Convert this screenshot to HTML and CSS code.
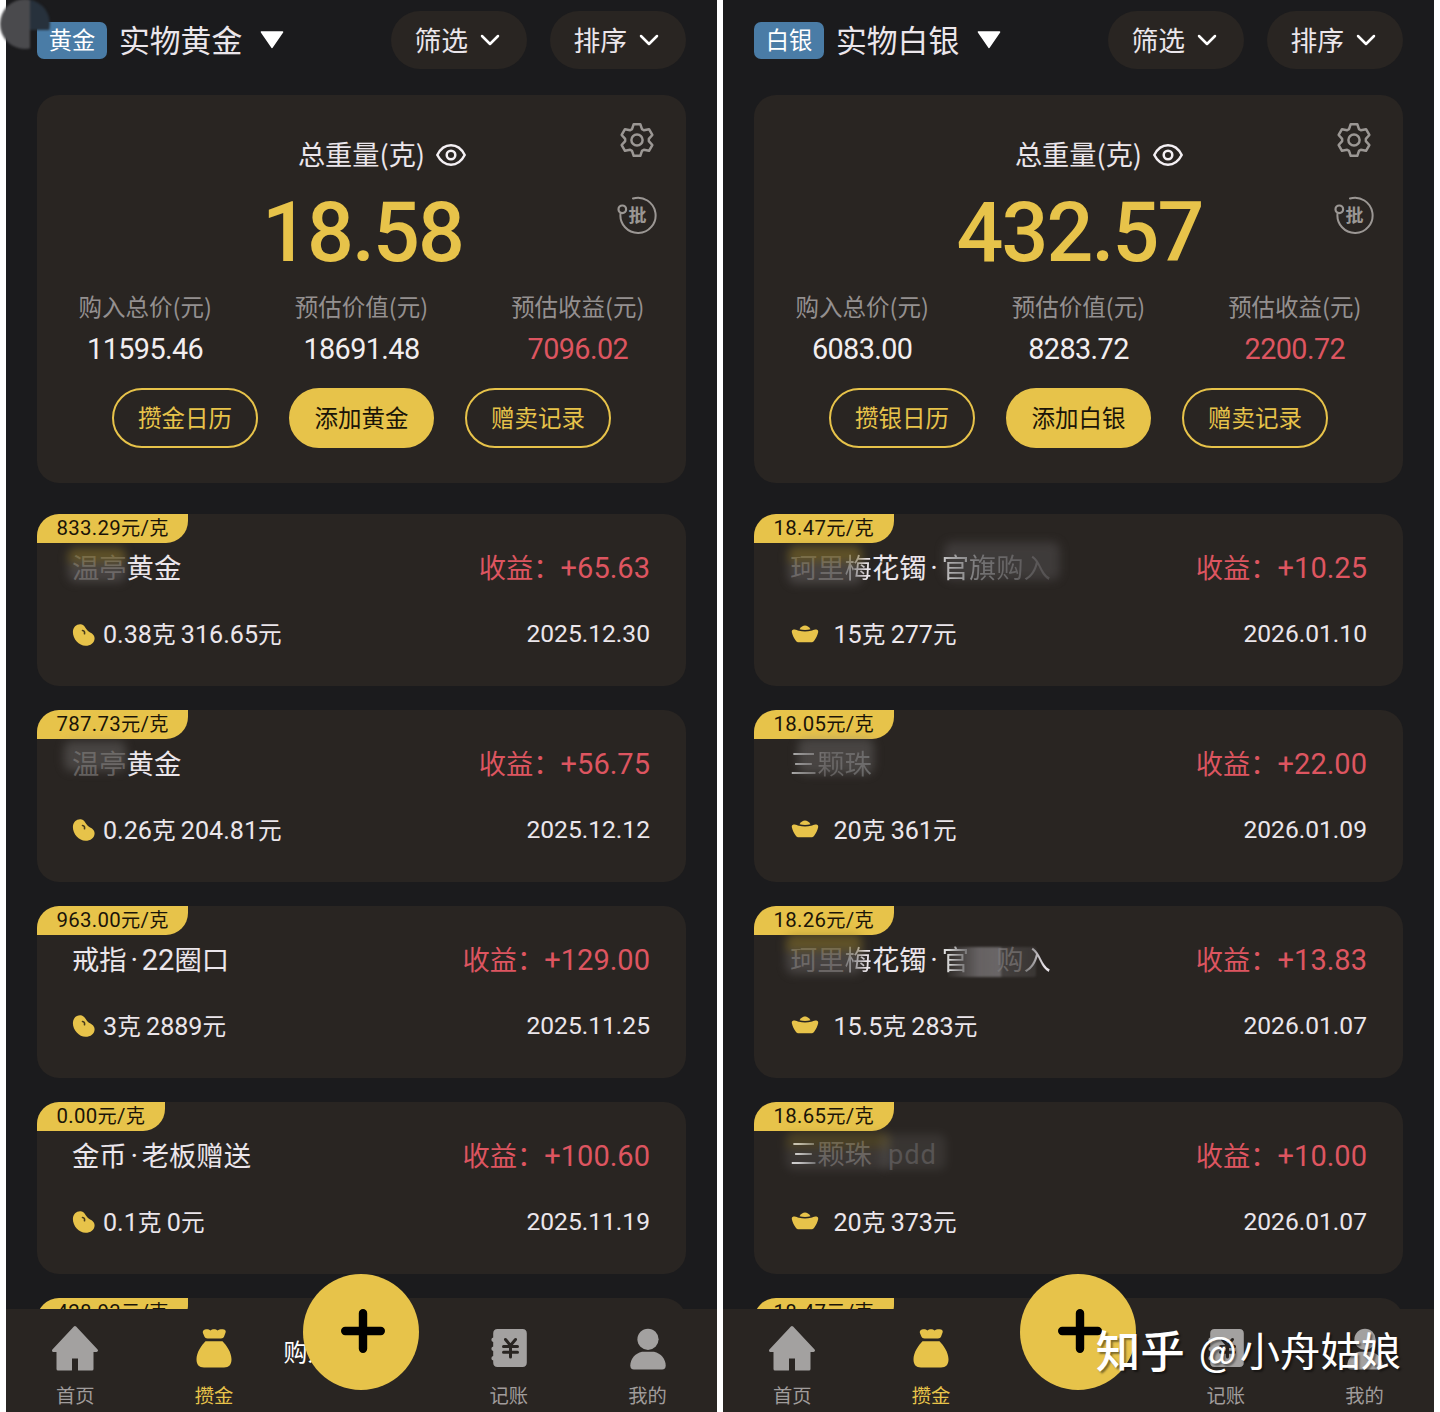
FILE: index.html
```html
<!DOCTYPE html>
<html lang="zh-CN">
<head>
<meta charset="utf-8">
<title>攒金</title>
<link rel="stylesheet" href="styles.css">
</head>
<body>
<svg class="sprite" aria-hidden="true">
  <symbol id="chevron" viewBox="0 0 20 12"><path d="M2 2l8 8 8-8" fill="none" stroke="#fff" stroke-width="2.500" stroke-linecap="round" stroke-linejoin="round"/></symbol>
  <symbol id="triangle" viewBox="0 0 24 18"><path d="M1.5 1h21L12 16.300z" fill="#fff" stroke="#fff" stroke-width="1.600" stroke-linejoin="round"/></symbol>
  <symbol id="eye" viewBox="0 0 30 22"><path d="M1.300 11C4.500 4.700 9.500 1.300 15 1.300S25.500 4.700 28.700 11C25.500 17.300 20.500 20.700 15 20.700S4.500 17.300 1.300 11z" fill="none" stroke="#f4f0f4" stroke-width="2.500" stroke-linejoin="round"/><circle cx="15" cy="11" r="4.300" fill="none" stroke="#f4f0f4" stroke-width="2.500"/></symbol>
  <symbol id="gear" viewBox="-20 -20 40 40"><path d="M-5-10.800L-3.300-15.800H3.300L5-10.800 6.850-9.730 12.030-10.760 15.330-5.040 11.850-1.070V1.070L15.330 5.040 12.030 10.760 6.850 9.730 5 10.800 3.300 15.800H-3.300L-5 10.800-6.850 9.730-12.030 10.760-15.330 5.040-11.850 1.070V-1.070L-15.330-5.040-12.030-10.760-6.850-9.730z" fill="none" stroke="#9b9794" stroke-width="2.500" stroke-linejoin="round"/><circle r="5.600" fill="none" stroke="#9b9794" stroke-width="2.500"/></symbol>
  <symbol id="batch" viewBox="0 0 40 40"><path d="M16 2.500A17.600 17.600 0 1 1 3.500 17.500" fill="none" stroke="#9b9794" stroke-width="2" stroke-linecap="round"/><circle cx="5.300" cy="13.300" r="3.800" fill="none" stroke="#9b9794" stroke-width="2.200"/></symbol>
  <symbol id="bean" viewBox="0 0 24 24"><path d="M8.500 1.200C12.500 1.500 13.500 5.500 16 8c2.500 2 6.700 3 6.600 7.500C22.500 20 18.500 22.800 13.500 22.800 7 22.600.8 16 .9 9 1 4 4.500 1 8.500 1.200z" fill="#e7c34a"/><path d="M10.500 7.500c2 .3 2.300 1.500 2 3.300" fill="none" stroke="#4a3d1c" stroke-width="1.600" stroke-linecap="round"/></symbol>
  <symbol id="ingot" viewBox="0 0 28 18"><path d="M2.500 4.500C5 4 6 5.200 8 5.800c3.500 1 8.500 1 12 0 2-.6 3-1.800 5.500-1.300 1.500.3 2 1.500 1.600 3-.8 3-2 5.500-3.600 7.800-.9 1.400-1.700 2-3.500 2H8c-1.800 0-2.600-.6-3.500-2C2.900 13 1.700 10.500.9 7.500.5 6 1 4.800 2.500 4.500z" fill="#e7c34a"/><path d="M8.500 4.300C10 1.500 12 .4 14 .4s4 1.100 5.500 3.900c-3.300.9-7.700.9-11 0z" fill="#e7c34a"/></symbol>
  <symbol id="home" viewBox="0 0 48 46"><path d="M24 2.500L45.500 25.500H41V44H27.500V33.500h-7V44H7V25.500H2.500z" fill="#a3a1a0" stroke="#a3a1a0" stroke-width="3" stroke-linejoin="round"/><path d="M21 46V33.500h6V46z" fill="#292522"/></symbol>
  <symbol id="bag" viewBox="0 0 36 40"><path d="M9 1.500c2.500-.6 4 0 5.500 1C16 .8 20 .8 21.500 2.500c1.500-1 4-1.600 6.500-1 1.800.5 2.200 2 1.300 3.800l-1.300 3.500c-.7 1.300-1.300 1.700-3 1.700H11.500c-1.700 0-2.300-.4-3-1.700L7 5.300C6.300 3.500 7.200 2 9 1.500z" fill="#e7c34a"/><path d="M9.500 13.300h17c4 4 9 11.200 9 18 0 5.500-2.500 8.200-7.500 8.200H8C3 39.500.5 36.800.5 31.300c0-6.800 5-14 9-18z" fill="#e7c34a"/></symbol>
  <symbol id="ledger" viewBox="0 0 36 40"><path d="M6.500 1h25a4.500 4.500 0 0 1 4.300 4.500v29a4.500 4.500 0 0 1-4.300 4.500h-25A4.500 4.500 0 0 1 2.200 34.500V32.500a2.300 2.300 0 0 1 0-4.500V23a2.300 2.300 0 0 1 0-4.500V14a2.300 2.300 0 0 1 0-4.500v-4A4.500 4.500 0 0 1 6.500 1z" fill="#a3a1a0"/><path d="M14.500 11.500l5 6 5-6M19.500 18v11M12.500 18.500h14M12.500 24.300h14" fill="none" stroke="#292522" stroke-width="3" stroke-linecap="round"/></symbol>
  <symbol id="user" viewBox="0 0 36 42"><circle cx="18" cy="11.300" r="10.600" fill="#a3a1a0"/><path d="M12 23.800h12c7 1.500 11.700 7.500 11.700 13.700 0 2.500-1.200 4-3.700 4H4c-2.500 0-3.700-1.500-3.700-4C.3 31.300 5 25.300 12 23.800z" fill="#a3a1a0"/></symbol>
  <symbol id="plus" viewBox="0 0 44 44"><path d="M22 4.200v35.600M4.200 22h35.600" stroke="#000" stroke-width="8.400" stroke-linecap="round"/></symbol>
</svg>

<main class="screens">
  <section class="phone">
    <header class="top">
      <span class="tag">黄金</span>
      <h1 class="asset">实物黄金</h1>
      <svg class="tri"><use href="#triangle"/></svg>
      <button class="pill">筛选<svg><use href="#chevron"/></svg></button>
      <button class="pill">排序<svg><use href="#chevron"/></svg></button>
    </header>
    <div class="summary">
      <div class="figures">
        <div class="caption">总重量(克)<svg><use href="#eye"/></svg></div>
        <div class="total">18.58</div>
        <dl class="stats">
          <div><dt>购入总价(元)</dt><dd>11595.46</dd></div>
          <div><dt>预估价值(元)</dt><dd>18691.48</dd></div>
          <div><dt>预估收益(元)</dt><dd class="red">7096.02</dd></div>
        </dl>
        <div class="actions"><button class="btn">攒金日历</button><button class="btn solid">添加黄金</button><button class="btn">赠卖记录</button></div>
      </div>
      <div class="tools"><svg><use href="#gear"/></svg><div class="batch"><svg><use href="#batch"/></svg><span>批</span></div></div>
    </div>
    <div class="list">
      <article class="item">
        <div class="price"><span class="n">833.29</span>元<span class="n">/</span>克</div>
        <div class="row head"><h2><span class="dim">温亭</span>黄金<i class="smear gold s1"></i></h2><p class="red">收益：<span class="n">+65.63</span></p></div>
        <div class="row"><p class="info"><svg class="bean"><use href="#bean"/></svg><span><span class="n">0.38</span>克 <span class="n">316.65</span>元</span></p><time>2025.12.30</time></div>
      </article>
      <article class="item">
        <div class="price"><span class="n">787.73</span>元<span class="n">/</span>克</div>
        <div class="row head"><h2><span class="dim">温亭</span>黄金<i class="smear s2"></i></h2><p class="red">收益：<span class="n">+56.75</span></p></div>
        <div class="row"><p class="info"><svg class="bean"><use href="#bean"/></svg><span><span class="n">0.26</span>克 <span class="n">204.81</span>元</span></p><time>2025.12.12</time></div>
      </article>
      <article class="item">
        <div class="price"><span class="n">963.00</span>元<span class="n">/</span>克</div>
        <div class="row head"><h2>戒指<span class="n dot">·</span><span class="n">22</span>圈口</h2><p class="red">收益：<span class="n">+129.00</span></p></div>
        <div class="row"><p class="info"><svg class="bean"><use href="#bean"/></svg><span><span class="n">3</span>克 <span class="n">2889</span>元</span></p><time>2025.11.25</time></div>
      </article>
      <article class="item">
        <div class="price"><span class="n">0.00</span>元<span class="n">/</span>克</div>
        <div class="row head"><h2>金币<span class="n dot">·</span>老板赠送</h2><p class="red">收益：<span class="n">+100.60</span></p></div>
        <div class="row"><p class="info"><svg class="bean"><use href="#bean"/></svg><span><span class="n">0.1</span>克 <span class="n">0</span>元</span></p><time>2025.11.19</time></div>
      </article>
      <article class="item">
        <div class="price"><span class="n">428.93</span>元<span class="n">/</span>克</div>
      </article>
    </div>
    <nav class="nav">
      <a><svg class="i-home"><use href="#home"/></svg>首页</a>
      <a class="on"><svg class="i-bag"><use href="#bag"/></svg>攒金</a>
      <div class="mid"><span class="under">购入</span><button class="fab"><svg><use href="#plus"/></svg></button></div>
      <a><svg class="i-ledger"><use href="#ledger"/></svg>记账</a>
      <a><svg class="i-user"><use href="#user"/></svg>我的</a>
    </nav>
    <i class="blot"></i>
  </section>

  <section class="phone silver">
    <header class="top">
      <span class="tag">白银</span>
      <h1 class="asset">实物白银</h1>
      <svg class="tri"><use href="#triangle"/></svg>
      <button class="pill">筛选<svg><use href="#chevron"/></svg></button>
      <button class="pill">排序<svg><use href="#chevron"/></svg></button>
    </header>
    <div class="summary">
      <div class="figures">
        <div class="caption">总重量(克)<svg><use href="#eye"/></svg></div>
        <div class="total">432.57</div>
        <dl class="stats">
          <div><dt>购入总价(元)</dt><dd>6083.00</dd></div>
          <div><dt>预估价值(元)</dt><dd>8283.72</dd></div>
          <div><dt>预估收益(元)</dt><dd class="red">2200.72</dd></div>
        </dl>
        <div class="actions"><button class="btn">攒银日历</button><button class="btn solid">添加白银</button><button class="btn">赠卖记录</button></div>
      </div>
      <div class="tools"><svg><use href="#gear"/></svg><div class="batch"><svg><use href="#batch"/></svg><span>批</span></div></div>
    </div>
    <div class="list">
      <article class="item">
        <div class="price"><span class="n">18.47</span>元<span class="n">/</span>克</div>
        <div class="row head"><h2><span class="dim">珂里</span><span class="fade">梅</span>花镯<span class="n dot">·</span><span class="fade out">官旗购入</span><i class="smear gold s3"></i><i class="smear s4"></i></h2><p class="red">收益：<span class="n">+10.25</span></p></div>
        <div class="row"><p class="info"><svg class="ingot"><use href="#ingot"/></svg><span><span class="n">15</span>克 <span class="n">277</span>元</span></p><time>2026.01.10</time></div>
      </article>
      <article class="item">
        <div class="price"><span class="n">18.05</span>元<span class="n">/</span>克</div>
        <div class="row head"><h2><span class="fade down">三颗珠</span><i class="smear s5"></i></h2><p class="red">收益：<span class="n">+22.00</span></p></div>
        <div class="row"><p class="info"><svg class="ingot"><use href="#ingot"/></svg><span><span class="n">20</span>克 <span class="n">361</span>元</span></p><time>2026.01.09</time></div>
      </article>
      <article class="item">
        <div class="price"><span class="n">18.26</span>元<span class="n">/</span>克</div>
        <div class="row head"><h2><span class="dim">珂里</span><span class="fade">梅</span>花镯<span class="n dot">·</span><span class="fade out1">官</span><span class="gone">旗</span><span class="dim">购</span><span class="fade">入</span><i class="smear gold s6"></i><i class="smear s7"></i></h2><p class="red">收益：<span class="n">+13.83</span></p></div>
        <div class="row"><p class="info"><svg class="ingot"><use href="#ingot"/></svg><span><span class="n">15.5</span>克 <span class="n">283</span>元</span></p><time>2026.01.07</time></div>
      </article>
      <article class="item">
        <div class="price"><span class="n">18.65</span>元<span class="n">/</span>克</div>
        <div class="row head"><h2><span class="fade out1">三</span><span class="dim">颗珠</span><span class="dim pdd">pdd</span><i class="smear gold s8"></i><i class="smear s9"></i></h2><p class="red">收益：<span class="n">+10.00</span></p></div>
        <div class="row"><p class="info"><svg class="ingot"><use href="#ingot"/></svg><span><span class="n">20</span>克 <span class="n">373</span>元</span></p><time>2026.01.07</time></div>
      </article>
      <article class="item">
        <div class="price"><span class="n">18.47</span>元<span class="n">/</span>克</div>
      </article>
    </div>
    <nav class="nav">
      <a><svg class="i-home"><use href="#home"/></svg>首页</a>
      <a class="on"><svg class="i-bag"><use href="#bag"/></svg>攒金</a>
      <div class="mid"><button class="fab"><svg><use href="#plus"/></svg></button></div>
      <a><svg class="i-ledger"><use href="#ledger"/></svg>记账</a>
      <a><svg class="i-user"><use href="#user"/></svg>我的</a>
    </nav>
    <div class="watermark"><b>知乎</b><span class="at">@</span><span>小舟姑娘</span></div>
  </section>
</main>
</body>
</html>
```
FILE: styles.css
```css
* { box-sizing: border-box; margin: 0; padding: 0; }
body {
  width: 1440px; height: 1412px; overflow: hidden; background: #fff;
  color: #ebe6eb; font-family: "Noto Sans CJK SC", sans-serif; font-weight: 400;
}
.sprite { position: absolute; width: 0; height: 0; }
svg { display: block; flex: none; }
button { font: inherit; color: inherit; border: 0; background: none; white-space: nowrap; }
h1, h2 { font-weight: 400; }

.screens { display: flex; gap: 6px; padding: 0 6px; height: 1412px; }
.phone {
  position: relative; width: 711px; height: 1412px; flex: none;
  background: #1b1b1d; padding: 11px 31px 0;
}

/* numerals sit slightly larger than the Chinese text around them */
.n { font-family: Roboto, sans-serif; font-size: 1.064em; line-height: 0; }
.red, .stats .red { color: #dd5560; }

/* header */
.top { display: flex; align-items: center; height: 58px; }
.tag {
  width: 70px; height: 37px; border-radius: 7px; background: #4a7ca6; color: #fff;
  font-size: 23.300px; line-height: 35px; text-align: center;
}
.asset { margin-left: 12px; font-size: 30.800px; line-height: 44px; padding-bottom: 2px; }
.tri { width: 24px; height: 18px; margin: 0 auto 0 18px; }
.pill {
  display: flex; align-items: center; width: 136px; height: 58px; padding-left: 23.500px;
  border-radius: 29px; background: #292522; font-size: 26.800px; line-height: 40px;
}
.pill + .pill { margin-left: 23px; }
.pill svg { width: 20px; height: 12px; margin-left: 12px; }

/* summary card */
.summary { display: grid; height: 388px; margin-top: 26px; border-radius: 22px; background: #292522; }
.figures, .tools { grid-area: 1 / 1; }
.figures { display: flex; flex-direction: column; padding-top: 38px; }
.caption { display: flex; justify-content: center; align-items: center; font-size: 27.200px; line-height: 40px; }
.caption svg { width: 30px; height: 22px; margin: 4px -41px 0 11px; }
.total {
  margin-top: 20px; text-align: center; color: #e7c34a;
  font: 500 82.500px/80px Roboto, sans-serif; letter-spacing: -1.900px; padding-left: 2px;
}
.stats { display: grid; grid-template-columns: repeat(3, 1fr); margin-top: 17px; text-align: center; }
.stats dt { color: #949090; font-size: 23.500px; line-height: 32px; }
.stats dd { margin-top: 9px; color: #f2eef0; font: 400 28.800px/36px Roboto, sans-serif; letter-spacing: -.600px; }
.actions { display: flex; justify-content: center; gap: 31px; margin-top: 21px; }
.btn {
  width: 145.500px; height: 60px; border: 2px solid #e7c34a; border-radius: 30px;
  color: #e7c34a; font-size: 23.500px; line-height: 53px; padding-bottom: 2px;
}
.btn.solid { background: #e7c34a; color: #1a1408; }
.tools { justify-self: end; display: flex; flex-direction: column; gap: 36px; padding: 25px 29px 0 0; z-index: 1; height: 150px; }
.tools svg { width: 40px; height: 40px; overflow: visible; }
.batch { display: grid; height: 40px; }
.batch > * { grid-area: 1 / 1; }
.batch span { color: #9b9794; font-size: 18px; font-weight: 700; line-height: 37px; text-align: center; padding-left: 1px; }

/* holdings */
.list { display: flex; flex-direction: column; gap: 23.900px; margin-top: 31px; height: 795px; overflow: hidden; }
.item { flex: none; height: 172px; border-radius: 22px; background: #292522; }
.price {
  width: fit-content; height: 29px; padding: 0 19.500px; border-radius: 22px 0 22px 0;
  background: #e7c34a; color: #1a1408; font-size: 19.200px; line-height: 27px; letter-spacing: .3px; white-space: nowrap;
}
.row { display: flex; justify-content: space-between; align-items: center; height: 40px; padding: 0 36px 0 35px; }
.head { margin: 3px 0 27px; }
.row h2 { position: relative; font-size: 27.300px; line-height: 40px; white-space: nowrap; }
.head .red { font-size: 27.300px; line-height: 40px; }
.dot { margin: 0 3.800px; }
.info { display: flex; align-items: center; font-size: 23.600px; line-height: 40px; }
.bean { width: 24px; height: 24px; margin: 3px 7px 0 0; }
.ingot { width: 28px; height: 18px; margin: 1px 14.500px 0 2px; }
.row time { font: 400 24.600px/40px Roboto, sans-serif; padding-top: 2px; }

/* smudged-out parts of names */
.dim { color: #625e5c; }
.gone { color: transparent; }
.fade { color: transparent; background: linear-gradient(90deg, #777, #ebe6eb 80%); background-clip: text; }
.fade.out { background-image: linear-gradient(90deg, #ddd, #777 35%, #494645); }
.fade.out1 { background-image: linear-gradient(90deg, #ddd 30%, #666); }
.fade.down { background-image: linear-gradient(100deg, #bbb, #5a5655 45%, #666); }
.pdd { font-family: Roboto, sans-serif; margin-left: 16px; color: #4f4b4a; letter-spacing: 1px; }
.silver .row h2 { left: 1px; }
.smear { position: absolute; border-radius: 8px; background: rgba(128, 124, 126, .36); filter: blur(5px); }
.smear.gold { background: linear-gradient(rgba(150, 126, 44, .5) 40%, rgba(128, 124, 126, .34) 45%); }
.s1 { left: -4px; top: 2px; width: 58px; height: 34px; }
.s2 { left: -8px; top: -1px; width: 62px; height: 30px; }
.s3 { left: -2px; top: 0; width: 74px; height: 38px; }
.s4 { left: 154px; top: -4px; width: 116px; height: 38px; background: rgba(110, 106, 108, .32); }
.s5 { left: 8px; top: -4px; width: 76px; height: 36px; }
.s6 { left: -4px; top: -4px; width: 76px; height: 40px; }
.s7 { left: 158px; top: 9px; width: 88px; height: 30px; border-radius: 2px; filter: blur(1px); background: linear-gradient(90deg, rgba(128, 124, 126, .1), rgba(128, 124, 126, .7) 35%, rgba(128, 124, 126, .75) 60%, rgba(128, 124, 126, .3) 61%, rgba(128, 124, 126, .2)); }
.s8 { left: -4px; top: 0; width: 104px; height: 38px; opacity: .6; }
.s9 { left: 90px; top: 2px; width: 66px; height: 36px; opacity: .5; }
.blot {
  position: absolute; left: -6px; top: -1px; width: 50px; height: 50px; border-radius: 50%;
  background:
    linear-gradient(#4a4a4d, #4a4a4d) 0 0 / 30px 100% no-repeat,
    linear-gradient(#27313c, #27313c) 30px 0 / 20px 31px no-repeat;
  filter: blur(1px);
}

/* bottom navigation */
.nav {
  position: absolute; left: 0; right: 0; bottom: 0; height: 103px;
  display: grid; grid-template-columns: 1fr 1fr 156px 1fr 1fr; background: #292522;
}
.nav a {
  display: flex; flex-direction: column; justify-content: flex-end; align-items: center;
  padding-bottom: 2px; color: #a09c9b; font-size: 19.300px; line-height: 30px;
}
.nav .on { color: #e7c34a; }
.i-home { width: 48px; height: 46px; margin-bottom: 9px; }
.i-bag { width: 36px; height: 40px; margin-bottom: 12px; }
.i-ledger { width: 36px; height: 40px; margin-bottom: 12px; }
.i-user { width: 36px; height: 42px; margin-bottom: 10px; }
.mid { position: relative; display: flex; justify-content: center; }
.under { position: absolute; left: 0; top: 24px; color: #fff; font-size: 24px; line-height: 36px; }
.fab {
  position: relative; display: grid; place-items: center; width: 116px; height: 116px; margin: -35px 1px 0 0;
  border-radius: 50%; background: #e7c34a;
}
.fab svg { width: 44px; height: 44px; margin: 0 0 2px 3px; }
.watermark {
  position: absolute; right: 33px; bottom: 33px; display: flex; align-items: center; color: #fff;
  font-size: 40.300px; font-weight: 500; line-height: 60px; text-shadow: 2px 2px 2px rgba(0, 0, 0, .45); white-space: nowrap;
}
.watermark span { font-weight: 400; }
.watermark b { font-size: 44.500px; font-weight: 500; }
.watermark .at { margin: 0 3px 0 14px; }
```
